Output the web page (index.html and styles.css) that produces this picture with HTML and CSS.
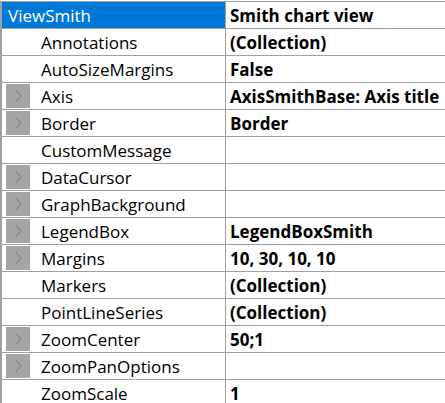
FILE: index.html
```html
<!DOCTYPE html>
<html>
<head>
<meta charset="utf-8">
<link rel="stylesheet" href="styles.css">
</head>
<body>
<div class="grid">
  <div class="row head"><div class="name">ViewSmith</div><div class="val">Smith chart view</div></div>
  <div class="row"><div class="name"><span class="sp"></span>Annotations</div><div class="val">(Collection)</div></div>
  <div class="row"><div class="name"><span class="sp"></span>AutoSizeMargins</div><div class="val">False</div></div>
  <div class="row"><div class="name"><span class="exp"><svg width="7" height="12" viewBox="0 0 7 12"><path d="M0.8 0.5 L6 6 L0.8 11.5" fill="none" stroke="#8a8a8a" stroke-width="1.2"/></svg></span>Axis</div><div class="val">AxisSmithBase: Axis title</div></div>
  <div class="row"><div class="name"><span class="exp"><svg width="7" height="12" viewBox="0 0 7 12"><path d="M0.8 0.5 L6 6 L0.8 11.5" fill="none" stroke="#8a8a8a" stroke-width="1.2"/></svg></span>Border</div><div class="val">Border</div></div>
  <div class="row"><div class="name"><span class="sp"></span>CustomMessage</div><div class="val"></div></div>
  <div class="row"><div class="name"><span class="exp"><svg width="7" height="12" viewBox="0 0 7 12"><path d="M0.8 0.5 L6 6 L0.8 11.5" fill="none" stroke="#8a8a8a" stroke-width="1.2"/></svg></span>DataCursor</div><div class="val"></div></div>
  <div class="row"><div class="name"><span class="exp"><svg width="7" height="12" viewBox="0 0 7 12"><path d="M0.8 0.5 L6 6 L0.8 11.5" fill="none" stroke="#8a8a8a" stroke-width="1.2"/></svg></span>GraphBackground</div><div class="val"></div></div>
  <div class="row"><div class="name"><span class="exp"><svg width="7" height="12" viewBox="0 0 7 12"><path d="M0.8 0.5 L6 6 L0.8 11.5" fill="none" stroke="#8a8a8a" stroke-width="1.2"/></svg></span>LegendBox</div><div class="val">LegendBoxSmith</div></div>
  <div class="row"><div class="name"><span class="exp"><svg width="7" height="12" viewBox="0 0 7 12"><path d="M0.8 0.5 L6 6 L0.8 11.5" fill="none" stroke="#8a8a8a" stroke-width="1.2"/></svg></span>Margins</div><div class="val">10, 30, 10, 10</div></div>
  <div class="row"><div class="name"><span class="sp"></span>Markers</div><div class="val">(Collection)</div></div>
  <div class="row"><div class="name"><span class="sp"></span>PointLineSeries</div><div class="val">(Collection)</div></div>
  <div class="row"><div class="name"><span class="exp"><svg width="7" height="12" viewBox="0 0 7 12"><path d="M0.8 0.5 L6 6 L0.8 11.5" fill="none" stroke="#8a8a8a" stroke-width="1.2"/></svg></span>ZoomCenter</div><div class="val">50;1</div></div>
  <div class="row"><div class="name"><span class="exp"><svg width="7" height="12" viewBox="0 0 7 12"><path d="M0.8 0.5 L6 6 L0.8 11.5" fill="none" stroke="#8a8a8a" stroke-width="1.2"/></svg></span>ZoomPanOptions</div><div class="val"></div></div>
  <div class="row"><div class="name"><span class="sp"></span>ZoomScale</div><div class="val">1</div></div>
</div>
</body>
</html>
```
FILE: styles.css
```css
html, body {
  margin: 0;
  padding: 0;
  background: #ffffff;
  overflow: hidden;
}
.grid {
  margin-top: 1px;
  border-top: 1px solid #a0a0a0;
  border-left: 2px solid #a0a0a0;
  font-family: "Open Sans", "Noto Sans", sans-serif;
  font-size: 17px;
  color: #000000;
}
.row {
  display: flex;
  height: 26px;
  border-bottom: 1px solid #a0a0a0;
}
.name {
  width: 224px;
  flex: none;
  display: flex;
  align-items: center;
  padding-left: 4px;
  box-sizing: border-box;
  border-right: 1px solid #a0a0a0;
  white-space: nowrap;
}
.head .name {
  background: #0078d7;
  color: #ffffff;
  padding-left: 6px;
}
.val {
  flex: 1;
  display: flex;
  align-items: center;
  padding-left: 4px;
  font-weight: 700;
  white-space: nowrap;
}
.sp, .exp {
  width: 24px;
  height: 24px;
  margin-right: 11px;
  flex: none;
}
.exp {
  background: #a5a5a5;
  display: flex;
  align-items: center;
  justify-content: center;
}
```
